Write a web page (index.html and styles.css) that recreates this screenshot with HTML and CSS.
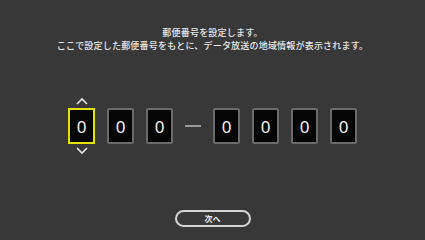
FILE: index.html
```html
<!DOCTYPE html>
<html lang="ja">
<head>
<meta charset="utf-8">
<link rel="stylesheet" href="styles.css">
</head>
<body>
<div class="screen">
  <div class="message">
    <p>郵便番号を設定します。</p>
    <p>ここで設定した郵便番号をもとに、データ放送の地域情報が表示されます。</p>
  </div>
  <div class="digits">
    <div class="cell active">
      <svg class="arrow" width="12" height="8" viewBox="0 0 12 8"><polyline points="1,7 6,2 11,7" fill="none" stroke="#e6e6e6" stroke-width="1.6"/></svg>
      <div class="box selected">0</div>
      <svg class="arrow" width="12" height="8" viewBox="0 0 12 8"><polyline points="1,1 6,6 11,1" fill="none" stroke="#e6e6e6" stroke-width="1.6"/></svg>
    </div>
    <div class="box">0</div>
    <div class="box">0</div>
    <div class="dash"></div>
    <div class="box">0</div>
    <div class="box">0</div>
    <div class="box">0</div>
    <div class="box">0</div>
  </div>
  <div class="actions">
    <button class="next">次へ</button>
  </div>
</div>
</body>
</html>
```
FILE: styles.css
```css
html, body {
  margin: 0;
  padding: 0;
  background: #383838;
}
.screen {
  width: 425px;
  height: 239px;
  box-sizing: border-box;
  padding-top: 27px;
  display: flex;
  flex-direction: column;
  align-items: center;
  font-family: "Noto Sans CJK JP", "Noto Sans", sans-serif;
  color: #e8e8e8;
}
.message {
  text-align: center;
  font-size: 9px;
  line-height: 12.6px;
  letter-spacing: 0.2px;
  font-weight: 500;
}
.message p {
  margin: 0;
}
.digits {
  margin-top: 45px;
  display: flex;
  align-items: center;
  gap: 12px;
}
.cell {
  display: flex;
  flex-direction: column;
  align-items: center;
  gap: 3px;
}
.arrow {
  display: block;
}
.box {
  width: 27px;
  height: 36px;
  box-sizing: border-box;
  border: 2px solid #6b6b6b;
  border-radius: 2px;
  background: #060606;
  color: #f4f4f4;
  font-family: "Noto Sans", sans-serif;
  font-size: 17px;
  display: flex;
  align-items: center;
  justify-content: center;
}
.box.selected {
  border-color: #e4e400;
  border-radius: 0;
}
.dash {
  width: 16px;
  height: 2px;
  background: #9a9a9a;
}
.actions {
  margin-top: 55px;
  display: flex;
}
.next {
  width: 76px;
  height: 17px;
  box-sizing: border-box;
  border: 2px solid #d4d4d4;
  border-radius: 9px;
  background: #383838;
  color: #f0f0f0;
  font-family: "Noto Sans CJK JP", sans-serif;
  font-size: 8px;
  font-weight: 700;
  padding: 0;
  line-height: 13px;
}
```
